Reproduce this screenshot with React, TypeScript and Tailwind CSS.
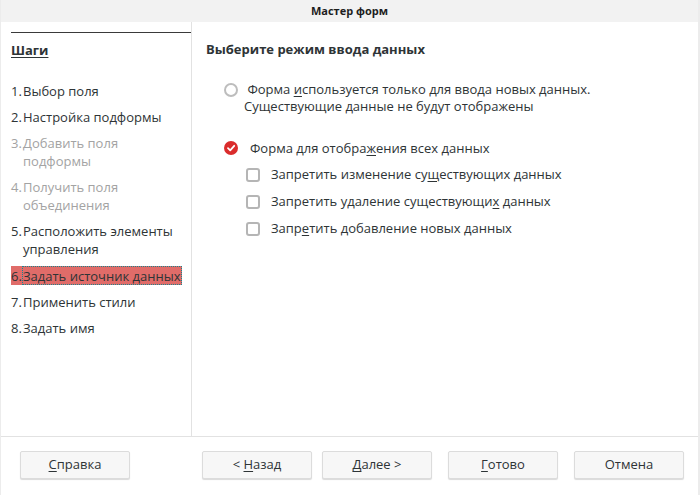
import React from "react"

const steps: { n: string; lines: string[]; state?: "off" | "active" }[] = [
  { n: "1.", lines: ["Выбор поля"] },
  { n: "2.", lines: ["Настройка подформы"] },
  { n: "3.", lines: ["Добавить поля", "подформы"], state: "off" },
  { n: "4.", lines: ["Получить поля", "объединения"], state: "off" },
  { n: "5.", lines: ["Расположить элементы", "управления"] },
  { n: "6.", lines: ["Задать источник данных"], state: "active" },
  { n: "7.", lines: ["Применить стили"] },
  { n: "8.", lines: ["Задать имя"] },
]

function U({ children }: { children: React.ReactNode }) {
  return <span className="underline underline-offset-2">{children}</span>
}

function Checkbox({ children }: { children: React.ReactNode }) {
  return (
    <div className="flex items-center h-[27px]">
      <span className="w-[14px] h-[14px] rounded-[3px] border-2 border-[#b5b5b5] bg-white mr-[11px]" />
      <span>{children}</span>
    </div>
  )
}

function Btn({ children, className = "" }: { children: React.ReactNode; className?: string }) {
  return (
    <button
      className={`w-[110px] h-[28px] bg-[#f7f7f7] border border-[#dcdcdc] rounded-[2px] shadow-[0_1px_1px_rgba(0,0,0,0.15)] text-[13px] text-[#2e3436] ${className}`}
    >
      {children}
    </button>
  )
}

export default function App() {
  return (
    <div
      className="w-[700px] h-[495px] bg-white flex flex-col text-[13px] text-[#2e3436] border-l border-r-2 border-[#ececec] overflow-hidden"
      style={{ fontFamily: '"Open Sans", "Noto Sans", sans-serif' }}
    >
      {/* title bar */}
      <div className="h-[22px] bg-[#f2f2f2] flex items-center justify-center text-[11px] font-bold text-[#1e1e1e] shrink-0">
        Мастер форм
      </div>

      <div className="flex flex-1 min-h-0">
        {/* steps */}
        <div className="w-[191px] border-r border-[#e2e2e2] pl-[10px] pt-[10px] shrink-0">
          <div className="h-px bg-[#3a3a3a]" />
          <div className="mt-[7px] font-bold underline underline-offset-2 leading-[20px]">Шаги</div>
          <div className="mt-[22px] flex flex-col gap-[8px]">
            {steps.map((s) => (
              <div
                key={s.n}
                className={`flex leading-[18px] whitespace-nowrap ${s.state === "off" ? "text-[#a3a3a3]" : ""} ${
                  s.state === "active" ? "bg-[#e06c69] w-[171px] h-[19px] items-center" : ""
                }`}
              >
                <span className="w-[11px] shrink-0">{s.n}</span>
                <div
                  className={
                    s.state === "active"
                      ? "border border-dotted border-[#17868f] h-[19px] flex items-center flex-1"
                      : "pl-px"
                  }
                >
                  {s.lines.map((l) => (
                    <div key={l}>{l}</div>
                  ))}
                </div>
              </div>
            ))}
          </div>
        </div>

        {/* page */}
        <div className="flex-1 pl-[14px] pt-[17px]">
          <div className="font-bold leading-[20px]">Выберите режим ввода данных</div>

          <div className="mt-[22px] ml-[18px] flex">
            <span className="w-[14px] h-[14px] rounded-full border-2 border-[#bdbdbd] bg-white mt-[2px] shrink-0" />
            <div className="ml-[6px] leading-[17px]">
              <div>
                {"\u00a0"}Форма <U>и</U>спользуется только для ввода новых данных.
              </div>
              <div>Существующие данные не будут отображены</div>
            </div>
          </div>

          <div className="mt-[23px] ml-[18px] flex items-center leading-[20px]">
            <span className="w-[14px] h-[14px] rounded-full bg-[#da2c2c] flex items-center justify-center shrink-0">
              <svg width="10" height="10" viewBox="0 0 10 10">
                <path d="M2 5.2 L4.2 7.3 L8.2 2.8" fill="none" stroke="white" strokeWidth="1.8" strokeLinecap="round" strokeLinejoin="round" />
              </svg>
            </span>
            <span className="ml-[12px]">
              Форма для отобра<U>ж</U>ения всех данных
            </span>
          </div>

          <div className="ml-[40px] mt-[3px] flex flex-col">
            <Checkbox>
              Запретить изменение су<U>щ</U>ествующих данных
            </Checkbox>
            <Checkbox>
              Запретить удаление существующи<U>х</U> данных
            </Checkbox>
            <Checkbox>
              Запр<U>е</U>тить добавление новых данных
            </Checkbox>
          </div>
        </div>
      </div>

      {/* buttons */}
      <div className="h-[59px] border-t border-[#e2e2e2] flex items-start pt-[14px] pl-[19px] shrink-0">
        <Btn>
          <U>С</U>правка
        </Btn>
        <Btn className="ml-[72px]">
          &lt; <U>Н</U>азад
        </Btn>
        <Btn className="ml-[10px]">
          <U>Д</U>алее &gt;
        </Btn>
        <Btn className="ml-[16px]">
          <U>Г</U>отово
        </Btn>
        <Btn className="ml-[16px]">Отмена</Btn>
      </div>
    </div>
  )
}
